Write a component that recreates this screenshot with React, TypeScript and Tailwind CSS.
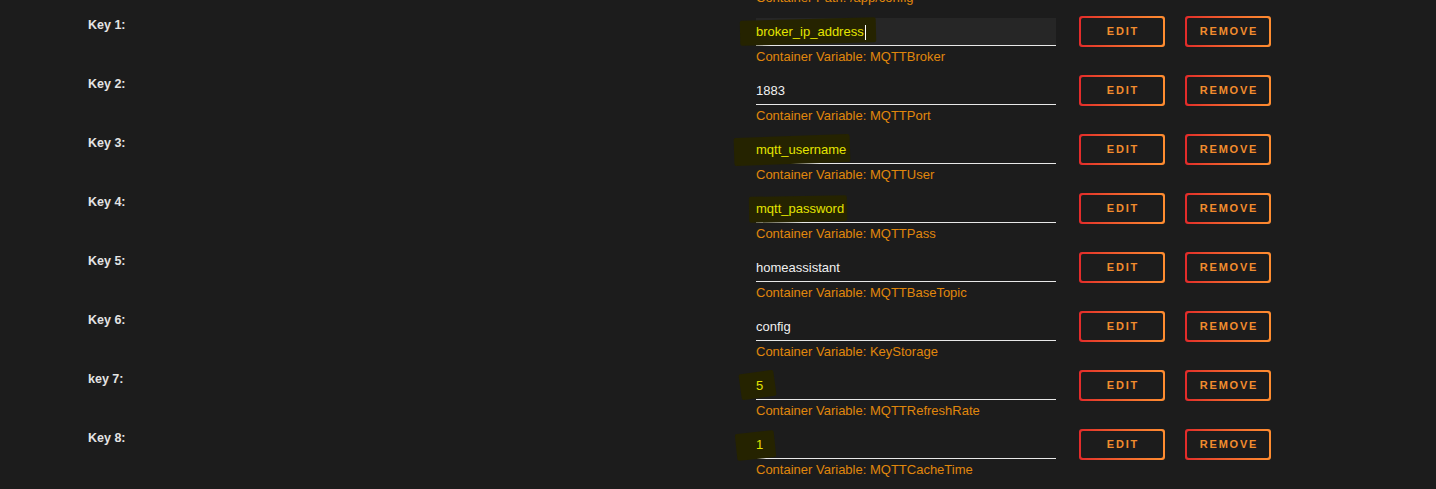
import * as React from 'react';

type Row = {
    label: string;
    value: string;
    variable: string;
    marked?: boolean;
    focused?: boolean;
    markClass?: string;
};

const rows: Row[] = [
    { label: 'Key 1:', value: 'broker_ip_address', variable: 'MQTTBroker', marked: true, focused: true, markClass: 'left-[-16px] right-[-10px] top-[-3px] bottom-[-2px] -rotate-[1.5deg]' },
    { label: 'Key 2:', value: '1883', variable: 'MQTTPort' },
    { label: 'Key 3:', value: 'mqtt_username', variable: 'MQTTUser', marked: true, markClass: 'left-[-22px] right-[-4px] top-[-4px] bottom-[-4px] -rotate-[2deg]' },
    { label: 'Key 4:', value: 'mqtt_password', variable: 'MQTTPass', marked: true, markClass: 'left-[-7px] right-[-3px] top-[-3px] bottom-[-3px] -rotate-[1deg]' },
    { label: 'Key 5:', value: 'homeassistant', variable: 'MQTTBaseTopic' },
    { label: 'Key 6:', value: 'config', variable: 'KeyStorage' },
    { label: 'key 7:', value: '5', variable: 'MQTTRefreshRate', marked: true, markClass: 'left-[-16px] right-[-12px] top-[-4px] bottom-[-2px] -rotate-[8deg]' },
    { label: 'Key 8:', value: '1', variable: 'MQTTCacheTime', marked: true, markClass: 'left-[-20px] right-[-12px] top-[-3px] bottom-[-4px] -rotate-[6deg]' },
];

const OutlineButton: React.FC<{ text: string }> = ({ text }) => (
    <button className="w-[86px] h-[31px] rounded-[3px] p-[2px] bg-gradient-to-r from-[#e22a2a] to-[#ff8d30]">
        <span className="w-full h-full flex items-center justify-center rounded-[2px] bg-[#1c1c1c] text-[#f28c2e] text-[11px] font-bold tracking-[1.8px] pl-[2px]">
            {text}
        </span>
    </button>
);

export default function App() {
    return (
        <div className="w-[1436px] h-[489px] overflow-hidden bg-[#1c1c1c] font-['Liberation_Sans',Arial,sans-serif]">
            {/* previous row's caption, cut by the top edge */}
            <div className="h-[16px] pl-[756px] overflow-hidden">
                <p className="mt-[-9px] text-[13px] leading-[14px] text-[#e0870c]">Container Path: /app/config</p>
            </div>

            {rows.map((row) => (
                <div key={row.label} className="flex h-[59px] items-start">
                    <div className="w-[756px] shrink-0 pl-[88px] mt-[1px] text-[12.5px] leading-[16px] font-bold text-[#e4e4e4]">
                        {row.label}
                    </div>

                    <div className="w-[300px] shrink-0 mt-[2px]">
                        <div className={`h-[28px] flex items-center border-b border-[#e8e8e8] ${row.focused ? 'bg-[#262626]' : ''}`}>
                            <span className={`relative text-[13px] ${row.marked ? 'text-[#e4e400]' : 'text-[#f0f0f0]'}`}>
                                {row.marked && (
                                    <span className={`absolute bg-[#252300] rounded-[2px] ${row.markClass}`} />
                                )}
                                <span className="relative">{row.value}</span>
                                {row.focused && <span className="relative inline-block w-px h-[15px] bg-white align-middle ml-px" />}
                            </span>
                        </div>
                        <p className="mt-[4px] text-[13px] leading-[14px] text-[#e0870c]">
                            Container Variable: {row.variable}
                        </p>
                    </div>

                    <div className="ml-[23px] flex gap-[20px]">
                        <OutlineButton text="EDIT" />
                        <OutlineButton text="REMOVE" />
                    </div>
                </div>
            ))}
        </div>
    );
}
